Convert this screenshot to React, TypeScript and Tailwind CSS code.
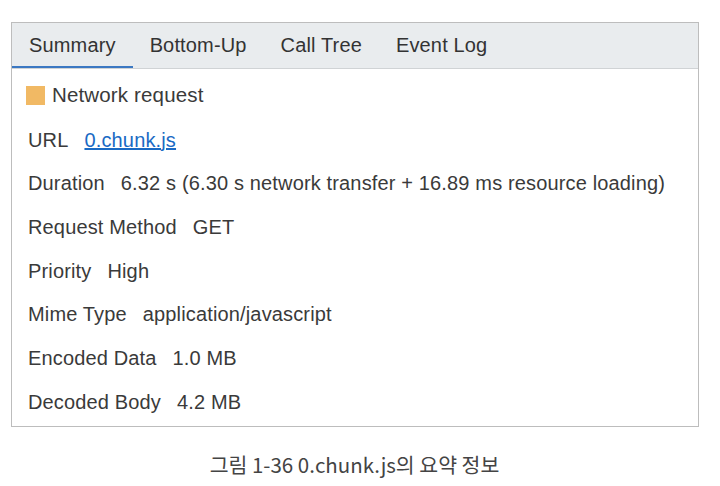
import React from "react";

const rows: [string, string][] = [
  ["Duration", "6.32 s (6.30 s network transfer + 16.89 ms resource loading)"],
  ["Request Method", "GET"],
  ["Priority", "High"],
  ["Mime Type", "application/javascript"],
  ["Encoded Data", "1.0 MB"],
  ["Decoded Body", "4.2 MB"],
];

const tabs = ["Summary", "Bottom-Up", "Call Tree", "Event Log"];

export default function App() {
  return (
    <div className="w-[720px] h-[486px] bg-white pt-[22px] px-[11px]" style={{ fontFamily: '"Liberation Sans", Arial, sans-serif' }}>
      <div className="w-[688px] h-[405px] border border-[#bdbdbd] flex flex-col">
        <div className="h-[46px] bg-[#e9ecee] border-b border-[#d0d3d5] flex text-[20px] tracking-[0.15px] text-[#333]">
          {tabs.map((t, i) => (
            <div
              key={t}
              className={
                i === 0
                  ? "h-full flex items-center px-[17px] border-b-2 border-[#3b78c2] pt-[1px]"
                  : "h-full flex items-center px-[17px] border-b-2 border-transparent pt-[1px]"
              }
            >
              {t}
            </div>
          ))}
        </div>
        <div className="flex flex-col pl-[14px] text-[20px] tracking-[0.15px] text-[#3a3a3a]">
          <div className="h-[43.7px] flex items-center gap-[7px] mt-[5px]">
            <div className="w-[19px] h-[19px] bg-[#f1b964]" />
            <span className="text-[20.5px]">Network request</span>
          </div>
          <div className="h-[43.7px] flex items-center pl-[2px]">
            <span>URL</span>
            <span className="ml-[16px] text-[#1a6ac4] underline">0.chunk.js</span>
          </div>
          {rows.map(([k, v]) => (
            <div key={k} className="h-[43.7px] flex items-center pl-[2px]">
              <span>{k}</span>
              <span className="ml-[16px]">{v}</span>
            </div>
          ))}
        </div>
      </div>
      <div className="mt-[22px] text-center text-[20.5px] text-[#444] pr-[11px]" style={{ fontFamily: '"Noto Sans CJK KR", "Noto Sans", sans-serif' }}>
        그림 1-36 0.chunk.js의 요약 정보
      </div>
    </div>
  );
}
